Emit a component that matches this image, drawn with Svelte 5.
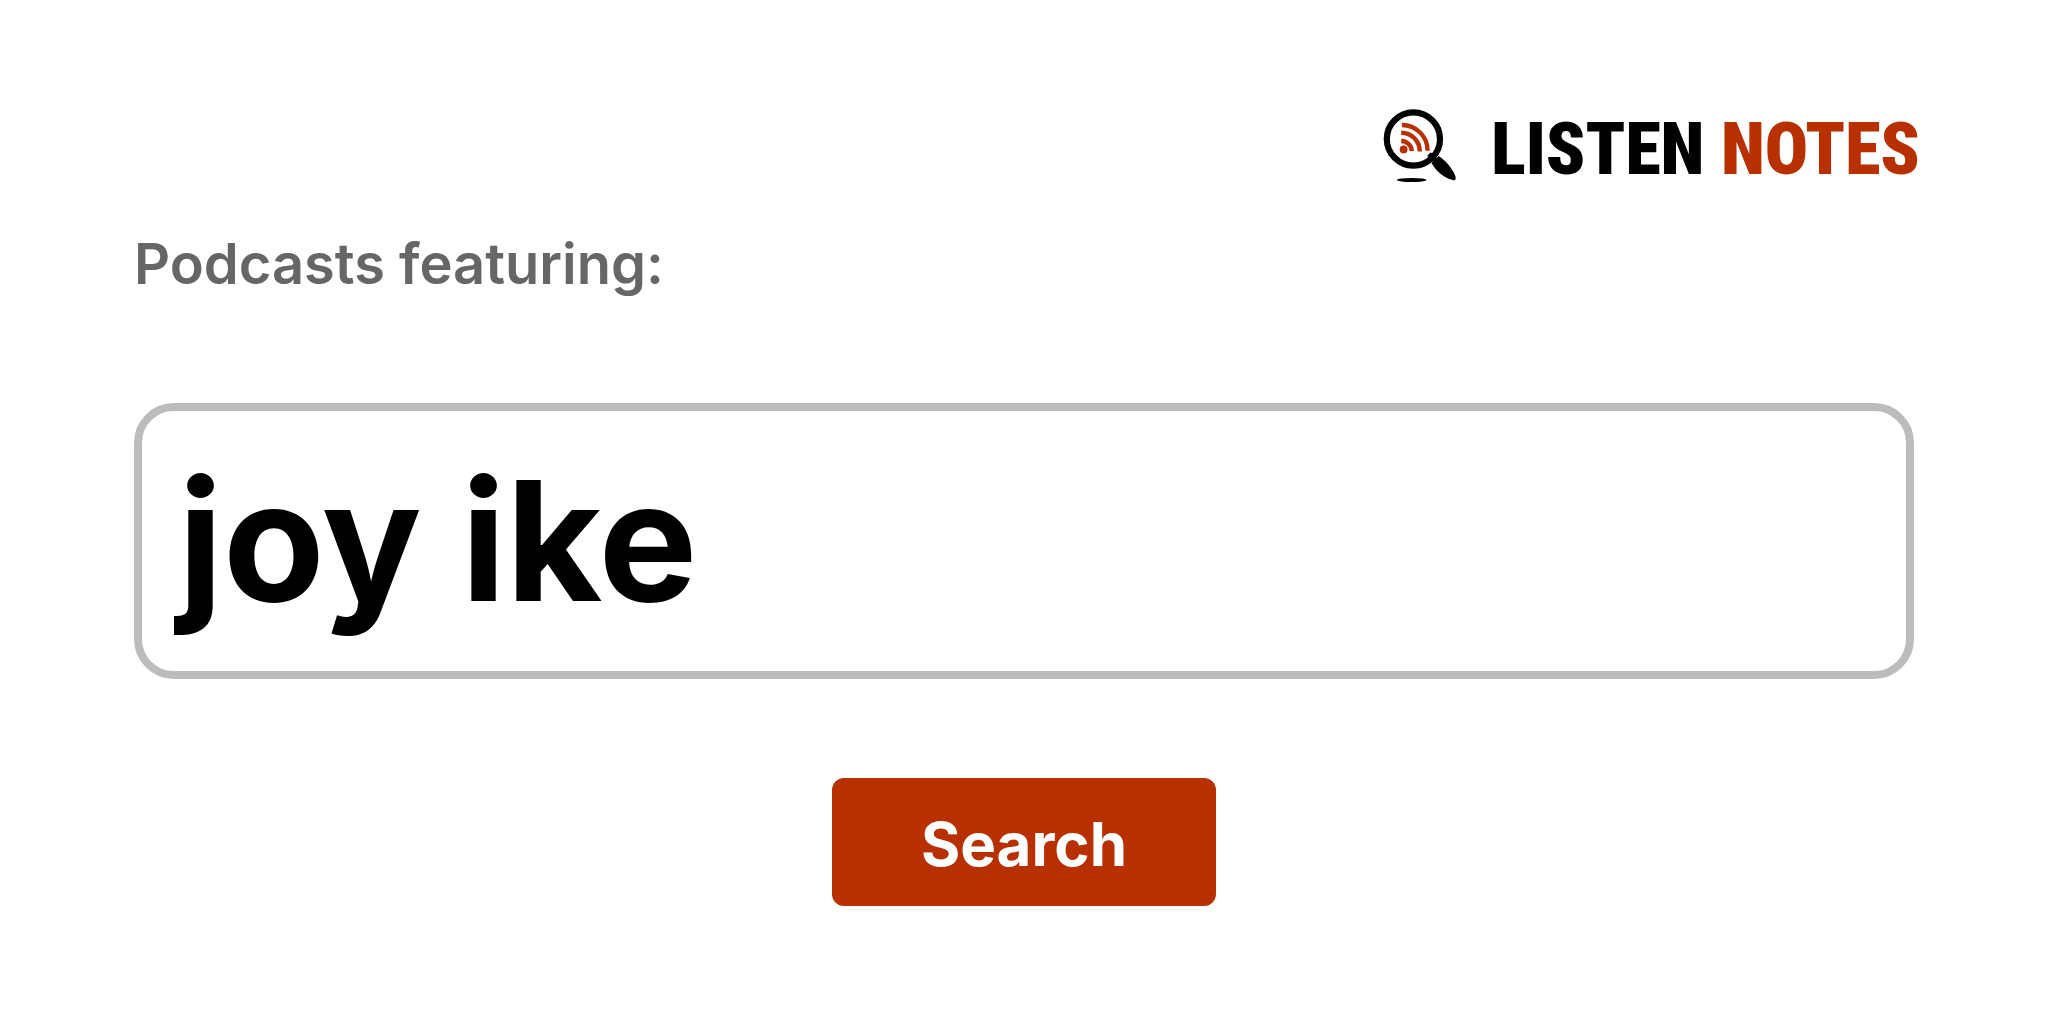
<script>
  let query = $state('joy ike');
</script>

<main>
  <header>
    <a class="brand" href="/" aria-label="Listen Notes">
      <svg viewBox="0 0 76 76" aria-hidden="true">
        <circle cx="30.4" cy="31" r="26.6" fill="#fff" stroke="#000" stroke-width="6.2" />
        <path d="M48.5 55 L55.5 48 C62 51.5 70 61 72.5 68.5 C73.2 71.5 72.2 72.8 69.5 72 C61.5 70 53 63.5 48.5 55Z" />
        <path d="M46 46 L54 54" stroke="#000" stroke-width="5" />
        <ellipse cx="28.7" cy="72" rx="14.7" ry="2" />
        <g fill="none" stroke="#b82f00" stroke-width="4.4">
          <path d="M18.9 17 A25.7 25.7 0 0 1 44.6 42.8" />
          <path d="M18.2 24.8 A18.6 18.6 0 0 1 36.8 43.6" />
          <path d="M18.2 33 A10.6 10.6 0 0 1 28.8 43" />
        </g>
        <circle cx="20.6" cy="41.4" r="3.9" fill="#b82f00" />
      </svg>
      <span class="name">LISTEN <span class="accent">NOTES</span></span>
    </a>
  </header>
  <form onsubmit={(event) => event.preventDefault()}>
    <label for="query">Podcasts featuring:</label>
    <input id="query" type="text" autocomplete="off" spellcheck="false" bind:value={query} />
    <button type="submit">Search</button>
  </form>
</main>

<style>
  :global(body) {
    margin: 0;
    background: #fff;
  }

  main {
    padding: 108px 128px 118px;
    font-family: Inter, 'Liberation Sans', sans-serif;
    color: #000;
  }

  header {
    display: flex;
    justify-content: flex-end;
  }

  .brand {
    display: flex;
    align-items: flex-start;
    gap: 32px;
    color: inherit;
    text-decoration: none;
  }

  .brand svg {
    width: 76px;
    height: 76px;
  }

  .name {
    padding-top: 4px;
    font-family: 'Roboto Condensed', 'Liberation Sans Narrow', Roboto, sans-serif;
    font-size: 72px;
    font-weight: 900;
    line-height: 76px;
    white-space: nowrap;
  }

  .accent {
    color: #b82f00;
  }

  form {
    display: flex;
    flex-direction: column;
    padding: 44px 6px 0;
  }

  label {
    color: #666;
    font-size: 56px;
    font-weight: 600;
    line-height: 64px;
  }

  input {
    box-sizing: border-box;
    width: 100%;
    height: 276px;
    margin: 107px 0 99px;
    padding: 0 32px 2px;
    border: 8px solid #bcbcbc;
    border-radius: 40px;
    background: #fff;
    color: inherit;
    font: inherit;
    font-size: 166px;
    font-weight: 700;
    text-indent: 4px;
    outline: none;
  }

  button {
    align-self: center;
    min-width: 384px;
    padding: 30px 32px 26px;
    border: 0;
    border-radius: 12px;
    background: #b82f00;
    color: #fff;
    font: inherit;
    font-size: 60px;
    font-weight: 700;
    line-height: 72px;
    cursor: pointer;
  }
</style>
